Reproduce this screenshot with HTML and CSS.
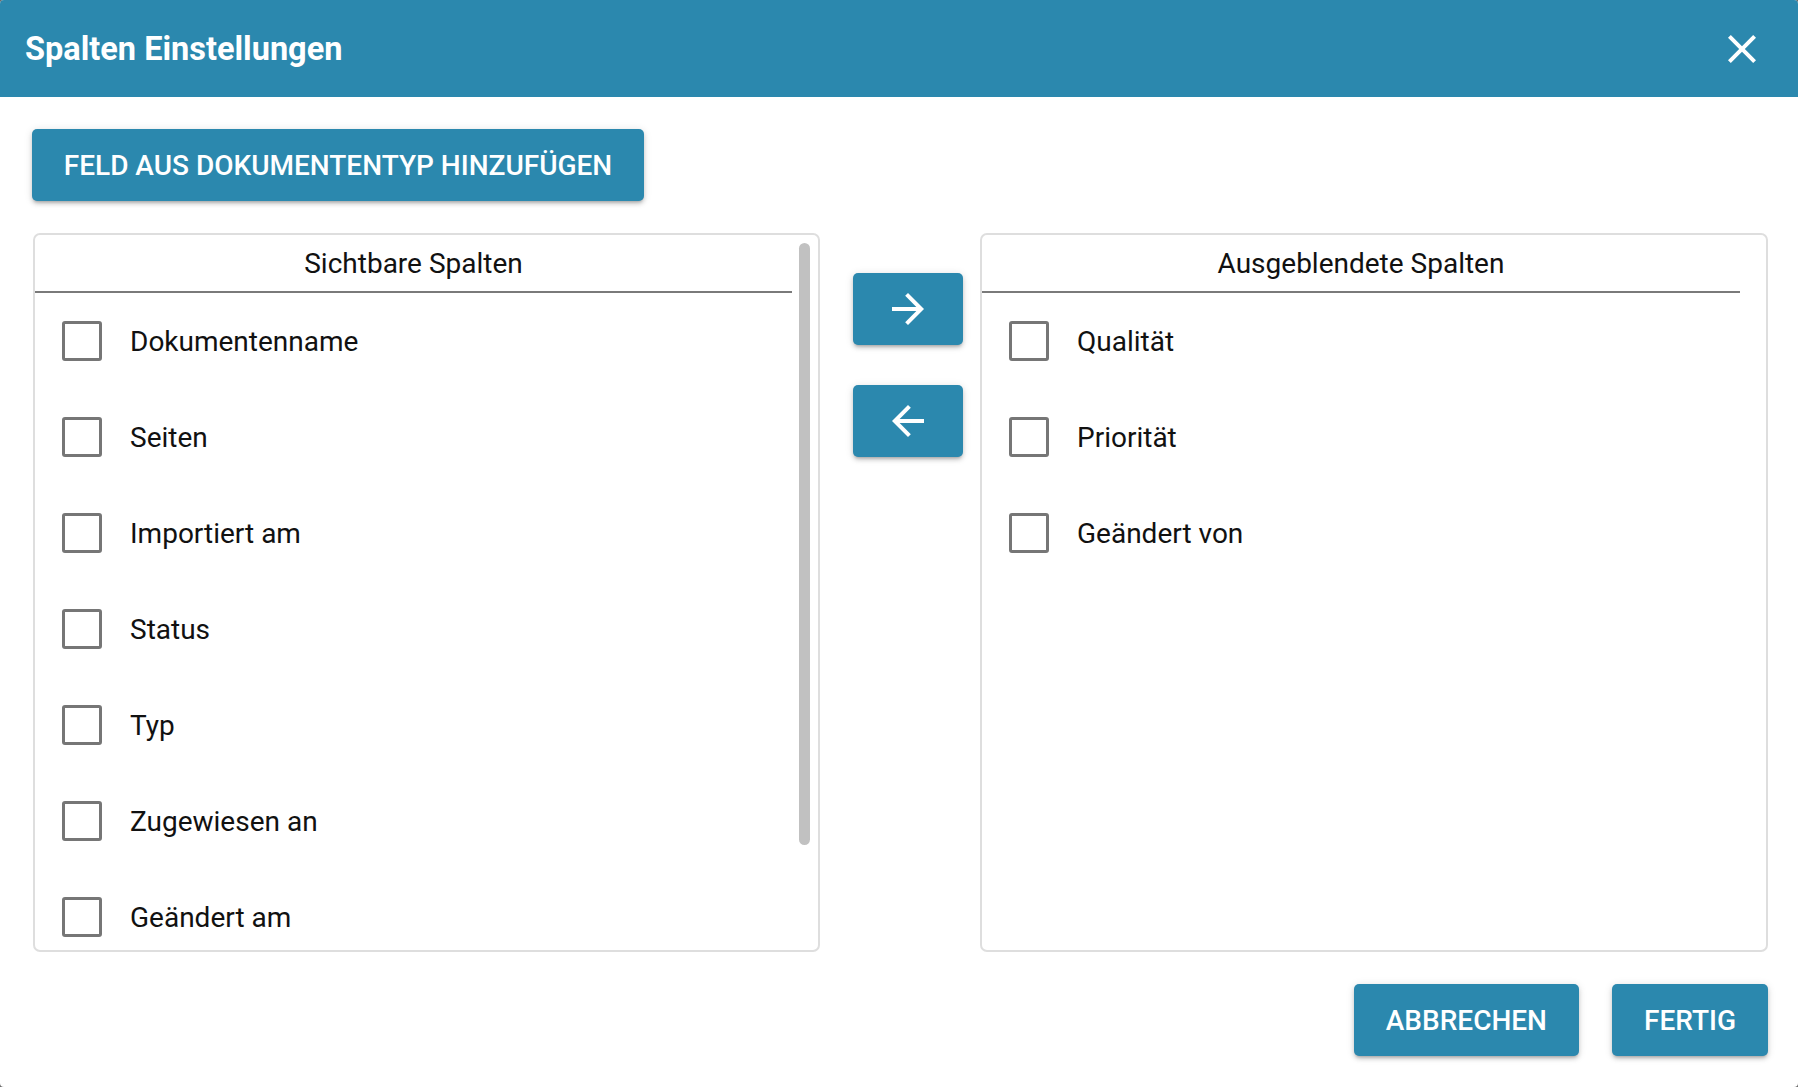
FILE: index.html
```html
<!DOCTYPE html>
<html lang="de">
<head>
<meta charset="utf-8">
<title>Spalten Einstellungen</title>
<link rel="stylesheet" href="styles.css">
</head>
<body>
<div class="dialog">
  <header class="dialog-header">
    <h1 class="dialog-title">Spalten Einstellungen</h1>
    <button class="close-btn" aria-label="Schließen">
      <svg viewBox="0 0 24 24" width="48" height="48"><path d="M19 6.41 17.59 5 12 10.59 6.41 5 5 6.41 10.59 12 5 17.59 6.41 19 12 13.41 17.59 19 19 17.59 13.41 12z" fill="#fff"/></svg>
    </button>
  </header>
  <main class="dialog-body">
    <div class="toolbar">
      <button class="btn btn-add">FELD AUS DOKUMENTENTYP HINZUFÜGEN</button>
    </div>
    <div class="columns">
      <section class="panel">
        <div class="panel-content">
          <div class="panel-head">Sichtbare Spalten</div>
          <ul class="list">
            <li class="item"><span class="check"></span><span class="label">Dokumentenname</span></li>
            <li class="item"><span class="check"></span><span class="label">Seiten</span></li>
            <li class="item"><span class="check"></span><span class="label">Importiert am</span></li>
            <li class="item"><span class="check"></span><span class="label">Status</span></li>
            <li class="item"><span class="check"></span><span class="label">Typ</span></li>
            <li class="item"><span class="check"></span><span class="label">Zugewiesen an</span></li>
            <li class="item"><span class="check"></span><span class="label">Geändert am</span></li>
          </ul>
        </div>
        <div class="scroll-thumb"></div>
      </section>
      <div class="movers">
        <button class="btn btn-arrow" aria-label="Ausblenden">
          <svg viewBox="0 0 24 24" width="48" height="48"><path d="M12 4l-1.41 1.41L16.17 11H4v2h12.17l-5.58 5.59L12 20l8-8z" fill="#fff"/></svg>
        </button>
        <button class="btn btn-arrow" aria-label="Einblenden">
          <svg viewBox="0 0 24 24" width="48" height="48"><path d="M20 11H7.83l5.59-5.59L12 4l-8 8 8 8 1.41-1.41L7.83 13H20v-2z" fill="#fff"/></svg>
        </button>
      </div>
      <section class="panel">
        <div class="panel-content">
          <div class="panel-head">Ausgeblendete Spalten</div>
          <ul class="list">
            <li class="item"><span class="check"></span><span class="label">Qualität</span></li>
            <li class="item"><span class="check"></span><span class="label">Priorität</span></li>
            <li class="item"><span class="check"></span><span class="label">Geändert von</span></li>
          </ul>
        </div>
      </section>
    </div>
    <div class="actions">
      <button class="btn btn-action">ABBRECHEN</button>
      <button class="btn btn-action">FERTIG</button>
    </div>
  </main>
</div>
</body>
</html>
```

FILE: styles.css
```css
* { box-sizing: border-box; }

html, body {
  margin: 0;
  height: 100%;
}

body {
  background: #6b6b6b;
  font-family: Roboto, "Liberation Sans", sans-serif;
  color: #111;
}

.dialog {
  height: 1087px;
  background: #fff;
  border-radius: 4px;
  overflow: hidden;
  display: flex;
  flex-direction: column;
}

.dialog-header {
  height: 97px;
  background: #2b88ae;
  display: flex;
  align-items: center;
  justify-content: space-between;
  padding: 0 32px 0 25px;
  flex: none;
}

.dialog-title {
  margin: 0;
  color: #fff;
  font-size: 32.5px;
  font-weight: 700;
}

.close-btn {
  background: none;
  border: 0;
  padding: 0;
  width: 48px;
  height: 48px;
  display: flex;
  align-items: center;
  justify-content: center;
  cursor: pointer;
}

.dialog-body {
  flex: 1;
  display: flex;
  flex-direction: column;
  padding: 32px 30px 30px 32px;
  gap: 32px;
}

.toolbar {
  display: flex;
}

.btn {
  background: #2b88ae;
  color: #fff;
  border: 0;
  border-radius: 5px;
  font-family: Roboto, "Liberation Sans", sans-serif;
  font-weight: 500;
  font-size: 28px;
  white-space: nowrap;
  box-shadow: 0 3px 3px -2px rgba(0,0,0,.2), 0 3px 4px 0 rgba(0,0,0,.14), 0 1px 8px 0 rgba(0,0,0,.12);
  cursor: pointer;
  display: flex;
  align-items: center;
  justify-content: center;
}

.btn-add {
  height: 72px;
  width: 612px;
  padding: 0;
}

.columns {
  display: grid;
  grid-template-columns: 787px 160px 1fr;
  height: 719px;
  margin-left: 1px;
}

.panel {
  position: relative;
  border: 2px solid #dedede;
  border-radius: 7px;
  overflow: hidden;
  height: 719px;
}

.panel-content {
  margin-right: 26px;
}

.scroll-thumb {
  position: absolute;
  top: 8px;
  right: 8px;
  width: 11px;
  height: 602px;
  border-radius: 6px;
  background: #c1c1c1;
}

.panel-head {
  height: 58px;
  border-bottom: 2px solid #7a7a7a;
  display: flex;
  align-items: center;
  justify-content: center;
  font-size: 28px;
  color: #111;
}

.list {
  list-style: none;
  margin: 0;
  padding: 0;
}

.item {
  height: 96px;
  display: flex;
  align-items: center;
  padding-left: 27px;
}

.check {
  width: 40px;
  height: 40px;
  border: 3.5px solid #767676;
  border-radius: 3px;
  flex: none;
}

.label {
  margin-left: 28px;
  font-size: 28px;
  color: #111;
}

.movers {
  display: flex;
  flex-direction: column;
  gap: 40px;
  padding: 40px 0 0 33px;
}

.btn-arrow {
  width: 110px;
  height: 72px;
  padding: 0;
}

.actions {
  display: flex;
  justify-content: flex-end;
  gap: 33px;
}

.btn-action {
  height: 72px;
  padding: 0 32px;
}
```
